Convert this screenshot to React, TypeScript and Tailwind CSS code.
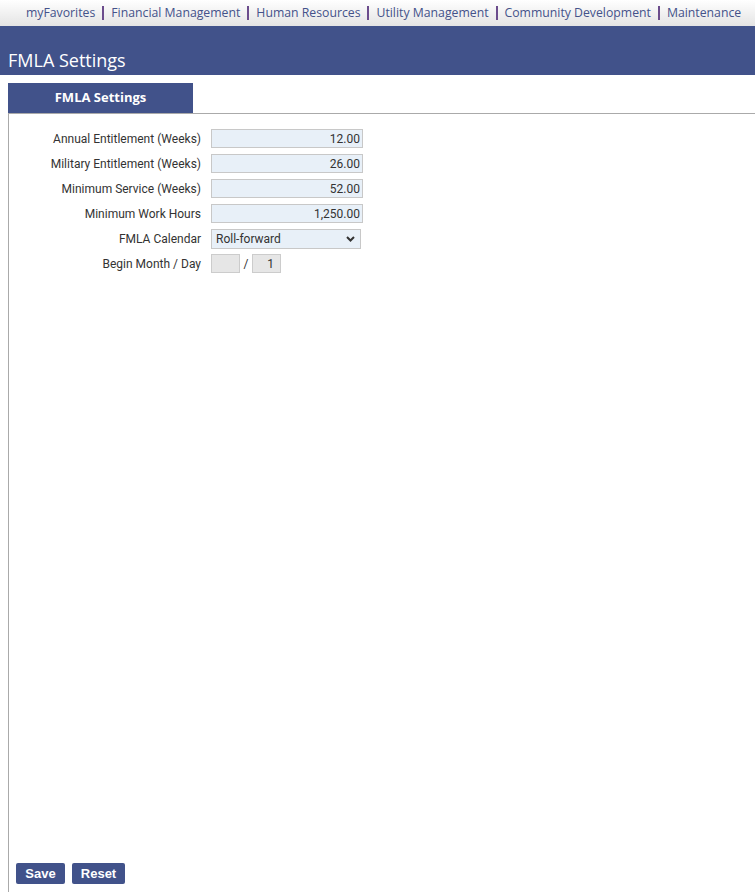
import React from 'react';

const navItems = ['myFavorites', 'Financial Management', 'Human Resources', 'Utility Management', 'Community Development', 'Maintenance'];

const numberFields = [
  { label: 'Annual Entitlement (Weeks)', value: '12.00' },
  { label: 'Military Entitlement (Weeks)', value: '26.00' },
  { label: 'Minimum Service (Weeks)', value: '52.00' },
  { label: 'Minimum Work Hours', value: '1,250.00' },
];

const Row: React.FC<{ label: string; children: React.ReactNode }> = ({ label, children }) => (
  <div className="flex items-center h-[25px]">
    <div className="w-[202px] pr-[10px] text-right text-[12px] text-[#333]">{label}</div>
    {children}
  </div>
);

export default function App() {
  return (
    <div className="min-h-screen flex flex-col bg-white" style={{ fontFamily: 'Roboto, sans-serif' }}>
      {/* top nav */}
      <div
        className="h-[26px] flex items-center pl-[26px] text-[12.25px] whitespace-nowrap text-[#44528a] bg-gradient-to-b from-white to-[#e4e4e4]"
        style={{ fontFamily: '"Open Sans", sans-serif' }}
      >
        {navItems.map((item, i) => (
          <React.Fragment key={item}>
            {i > 0 && <span className="mx-[7px] w-[2px] h-[14px] shrink-0 bg-[#6b4c8c]" />}
            <span>{item}</span>
          </React.Fragment>
        ))}
      </div>

      {/* page title band */}
      <div className="h-[49px] bg-[#41528a] flex items-end px-[8px] pb-[3px]">
        <h1 className="text-white text-[18px] leading-[24px]" style={{ fontFamily: '"Open Sans", sans-serif' }}>
          FMLA Settings
        </h1>
      </div>

      {/* tabs */}
      <div className="pt-[8px] pl-[8px]">
        <div
          className="w-[185px] h-[30px] bg-[#41528a] text-white font-bold text-[13px] flex items-center justify-center"
          style={{ fontFamily: '"Open Sans", sans-serif' }}
        >
          FMLA Settings
        </div>
      </div>

      <div className="flex-1 ml-[8px] border-t border-l border-[#aaaaaa] flex flex-col">
        <div className="pt-[12px] flex flex-col">
          {numberFields.map((f) => (
            <Row key={f.label} label={f.label}>
              <input
                readOnly
                value={f.value}
                className="w-[152px] h-[19px] bg-[#e8f0f8] border border-[#c8c8c8] text-right pr-[2px] text-[12px] text-[#333] outline-none"
              />
            </Row>
          ))}
          <Row label="FMLA Calendar">
            <div className="w-[150px] h-[20px] bg-[#e8f0f8] border border-[#c8c8c8] flex items-center justify-between pl-[4px] pr-[5px] text-[12px] text-[#333]">
              <span>Roll-forward</span>
              <svg width="9" height="6" viewBox="0 0 9 6">
                <path d="M1 1 L4.5 4.5 L8 1" fill="none" stroke="#333" strokeWidth="2" />
              </svg>
            </div>
          </Row>
          <Row label="Begin Month / Day">
            <div className="flex items-center text-[12px] text-[#333]">
              <div className="w-[29px] h-[19px] bg-[#e6e6e6] border border-[#cccccc]" />
              <span className="w-[12px] text-center">/</span>
              <div className="w-[29px] h-[19px] bg-[#e6e6e6] border border-[#cccccc] flex items-center justify-end pr-[6px]">1</div>
            </div>
          </Row>
        </div>

        <div className="mt-auto flex gap-[7px] pl-[7px] pb-[8px]">
          <button
            className="w-[49px] h-[21px] rounded-[2px] bg-[#41528a] text-white font-bold text-[13px]"
            style={{ fontFamily: '"Liberation Sans", Arial, sans-serif' }}
          >
            Save
          </button>
          <button
            className="w-[53px] h-[21px] rounded-[2px] bg-[#41528a] text-white font-bold text-[13px]"
            style={{ fontFamily: '"Liberation Sans", Arial, sans-serif' }}
          >
            Reset
          </button>
        </div>
      </div>
    </div>
  );
}
